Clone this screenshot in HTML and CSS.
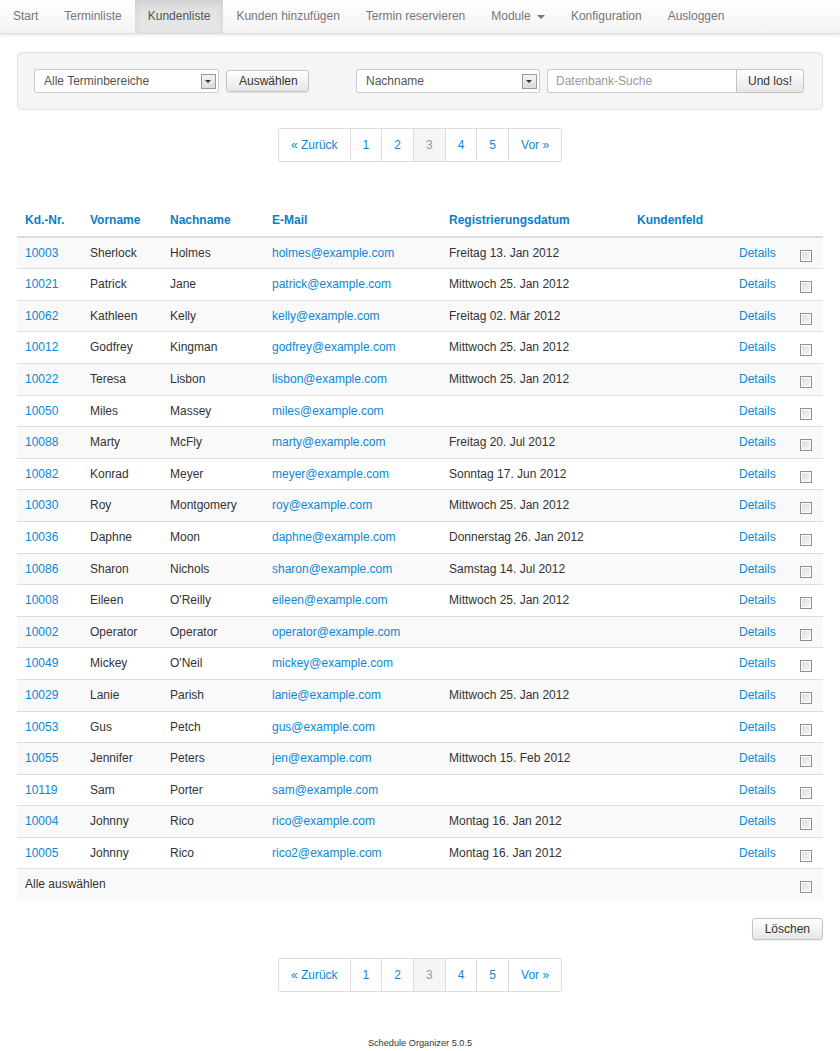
FILE: index.html
```html
<!DOCTYPE html>
<html lang="de">
<head>
    <meta charset="UTF-8">
    <title>Kundenliste</title>
    <link rel="stylesheet" href="styles.css">
</head>
<body>
    <nav class="navbar">
        <a href="#">Start</a>
        <a href="#">Terminliste</a>
        <a href="#" class="active">Kundenliste</a>
        <a href="#">Kunden hinzufügen</a>
        <a href="#">Termin reservieren</a>
        <a href="#">Module <span class="caret"></span></a>
        <a href="#">Konfiguration</a>
        <a href="#">Ausloggen</a>
    </nav>

    <div class="page">
        <div class="well">
            <div class="group">
                <div class="select-box wide">
                    <select><option>Alle Terminbereiche</option></select>
                    <span class="arrow"></span>
                </div>
                <button class="btn">Auswählen</button>
            </div>
            <div class="group">
                <div class="select-box">
                    <select><option>Nachname</option></select>
                    <span class="arrow"></span>
                </div>
                <div class="search">
                    <input type="text" placeholder="Datenbank-Suche">
                    <button class="btn attached">Und los!</button>
                </div>
            </div>
        </div>

        <ul class="pagination">
            <li><a href="#">« Zurück</a></li>
            <li><a href="#">1</a></li>
            <li><a href="#">2</a></li>
            <li class="current"><span>3</span></li>
            <li><a href="#">4</a></li>
            <li><a href="#">5</a></li>
            <li><a href="#">Vor »</a></li>
        </ul>

        <table class="customers">
            <thead>
                <tr>
                    <th class="c-nr">Kd.-Nr.</th>
                    <th class="c-first">Vorname</th>
                    <th class="c-last">Nachname</th>
                    <th class="c-mail">E-Mail</th>
                    <th class="c-date">Registrierungsdatum</th>
                    <th class="c-field">Kundenfeld</th>
                    <th class="c-det"></th>
                    <th class="c-chk"></th>
                </tr>
            </thead>
            <tbody id="rows"></tbody>
            <tfoot>
                <tr>
                    <td colspan="7">Alle auswählen</td>
                    <td><input type="checkbox" class="chk"></td>
                </tr>
            </tfoot>
        </table>

        <div class="actions">
            <button class="btn">Löschen</button>
        </div>

        <ul class="pagination">
            <li><a href="#">« Zurück</a></li>
            <li><a href="#">1</a></li>
            <li><a href="#">2</a></li>
            <li class="current"><span>3</span></li>
            <li><a href="#">4</a></li>
            <li><a href="#">5</a></li>
            <li><a href="#">Vor »</a></li>
        </ul>

        <footer class="footer">Schedule Organizer 5.0.5</footer>
    </div>

    <script>
        const customers = [
            ["10003", "Sherlock", "Holmes", "holmes@example.com", "Freitag 13. Jan 2012"],
            ["10021", "Patrick", "Jane", "patrick@example.com", "Mittwoch 25. Jan 2012"],
            ["10062", "Kathleen", "Kelly", "kelly@example.com", "Freitag 02. Mär 2012"],
            ["10012", "Godfrey", "Kingman", "godfrey@example.com", "Mittwoch 25. Jan 2012"],
            ["10022", "Teresa", "Lisbon", "lisbon@example.com", "Mittwoch 25. Jan 2012"],
            ["10050", "Miles", "Massey", "miles@example.com", ""],
            ["10088", "Marty", "McFly", "marty@example.com", "Freitag 20. Jul 2012"],
            ["10082", "Konrad", "Meyer", "meyer@example.com", "Sonntag 17. Jun 2012"],
            ["10030", "Roy", "Montgomery", "roy@example.com", "Mittwoch 25. Jan 2012"],
            ["10036", "Daphne", "Moon", "daphne@example.com", "Donnerstag 26. Jan 2012"],
            ["10086", "Sharon", "Nichols", "sharon@example.com", "Samstag 14. Jul 2012"],
            ["10008", "Eileen", "O'Reilly", "eileen@example.com", "Mittwoch 25. Jan 2012"],
            ["10002", "Operator", "Operator", "operator@example.com", ""],
            ["10049", "Mickey", "O'Neil", "mickey@example.com", ""],
            ["10029", "Lanie", "Parish", "lanie@example.com", "Mittwoch 25. Jan 2012"],
            ["10053", "Gus", "Petch", "gus@example.com", ""],
            ["10055", "Jennifer", "Peters", "jen@example.com", "Mittwoch 15. Feb 2012"],
            ["10119", "Sam", "Porter", "sam@example.com", ""],
            ["10004", "Johnny", "Rico", "rico@example.com", "Montag 16. Jan 2012"],
            ["10005", "Johnny", "Rico", "rico2@example.com", "Montag 16. Jan 2012"]
        ];

        const tbody = document.getElementById("rows");
        customers.forEach(c => {
            const tr = document.createElement("tr");
            tr.innerHTML = `
                <td><a href="#">${c[0]}</a></td>
                <td>${c[1]}</td>
                <td>${c[2]}</td>
                <td><a href="#">${c[3]}</a></td>
                <td>${c[4]}</td>
                <td></td>
                <td><a href="#">Details</a></td>
                <td><input type="checkbox" class="chk"></td>
            `;
            tbody.appendChild(tr);
        });
    </script>
</body>
</html>
```

FILE: styles.css
```css
* {
    box-sizing: border-box;
}

body {
    margin: 0;
    font-family: "Liberation Sans", Arial, sans-serif;
    font-size: 12px;
    line-height: 18.6px;
    color: #333;
    background: #fff;
}

a {
    color: #0a88d4;
    text-decoration: none;
}

/* navbar */
.navbar {
    display: flex;
    height: 34px;
    background: linear-gradient(to bottom, #ffffff 0%, #f3f3f3 100%);
    border-bottom: 1px solid #dcdcdc;
    box-shadow: 0 1px 3px rgba(0, 0, 0, 0.12);
}

.navbar a {
    display: block;
    padding: 0 13px;
    line-height: 33px;
    color: #777;
}

.navbar a.active {
    color: #555;
    background: linear-gradient(to bottom, #dedede 0%, #e9e9e9 100%);
    box-shadow: inset 0 3px 8px rgba(0, 0, 0, 0.08);
}

.caret {
    display: inline-block;
    width: 0;
    height: 0;
    margin-left: 3px;
    vertical-align: middle;
    border-top: 4px solid #777;
    border-left: 4px solid transparent;
    border-right: 4px solid transparent;
}

.page {
    padding: 0 17px;
}

/* search well */
.well {
    display: flex;
    gap: 47px;
    margin-top: 18px;
    padding: 16px;
    background: #f5f5f5;
    border: 1px solid #e3e3e3;
    border-radius: 4px;
    box-shadow: inset 0 1px 1px rgba(0, 0, 0, 0.03);
}

.group {
    display: flex;
    align-items: center;
    gap: 7px;
}

.select-box {
    position: relative;
    width: 184px;
    height: 24px;
}

.select-box.wide {
    width: 185px;
}

.select-box select {
    appearance: none;
    -webkit-appearance: none;
    width: 100%;
    height: 24px;
    padding: 0 24px 0 9px;
    font: inherit;
    color: #555;
    background: #fff;
    border: 1px solid #ccc;
    border-radius: 2px;
    outline: none;
}

.select-box .arrow {
    position: absolute;
    top: 5px;
    right: 3px;
    width: 15px;
    height: 15px;
    background: linear-gradient(to bottom, #f4f4f4, #dcdcdc);
    border: 1px solid #9a9a9a;
    pointer-events: none;
}

.select-box .arrow::after {
    content: "";
    position: absolute;
    top: 5px;
    left: 3px;
    border-top: 3px solid #333;
    border-left: 3px solid transparent;
    border-right: 3px solid transparent;
}

.search {
    display: flex;
}

.search input {
    width: 189px;
    height: 24px;
    padding: 0 8px;
    font: inherit;
    color: #555;
    border: 1px solid #ccc;
    border-right: none;
    border-radius: 3px 0 0 3px;
    outline: none;
}

.search input::placeholder {
    color: #999;
}

.btn {
    height: 22px;
    padding: 0 12px;
    font: inherit;
    line-height: 20px;
    white-space: nowrap;
    color: #333;
    background: linear-gradient(to bottom, #ffffff 0%, #e6e6e6 100%);
    border: 1px solid #c4c4c4;
    border-radius: 3px;
    box-shadow: 0 1px 1px rgba(0, 0, 0, 0.08);
    cursor: pointer;
}

.group > .btn {
    width: 83px;
}

.btn.attached {
    width: 68px;
    height: 24px;
    padding: 0;
    border-radius: 0 3px 3px 0;
    box-shadow: none;
}

/* pagination */
.pagination {
    display: flex;
    justify-content: center;
    margin: 18px 0 0;
    padding: 0;
    list-style: none;
}

.pagination li a,
.pagination li span {
    display: block;
    padding: 7px 12px;
    line-height: 18px;
    border: 1px solid #ddd;
    margin-left: -1px;
    background: #fff;
}

.pagination li:first-child a {
    margin-left: 0;
    border-radius: 3px 0 0 3px;
}

.pagination li:last-child a {
    border-radius: 0 3px 3px 0;
}

.pagination li.current span {
    color: #999;
    background: #f5f5f5;
}

/* table */
.customers {
    width: 100%;
    margin-top: 43px;
    border-collapse: collapse;
}

.customers th,
.customers td {
    padding: 6px 8px;
    text-align: left;
    vertical-align: top;
}

.customers th {
    color: #0a7fc8;
    font-weight: bold;
    border-bottom: 2px solid #ddd;
}

.customers td {
    border-top: 1px solid #ddd;
}

.customers tbody tr:nth-child(odd) td,
.customers tfoot td {
    background: #f9f9f9;
}

.customers tbody tr:first-child td {
    border-top: none;
}

.c-nr { width: 65px; }
.c-first { width: 80px; }
.c-last { width: 102px; }
.c-mail { width: 177px; }
.c-date { width: 188px; }
.c-field { width: 102px; }
.c-det { width: 59px; }
.c-chk { width: 33px; }

.chk {
    appearance: none;
    -webkit-appearance: none;
    display: block;
    width: 12px;
    height: 12px;
    margin: 6px 0 0 2px;
    background: linear-gradient(135deg, #dcdcdc 0%, #f7f7f7 100%);
    border: 1px solid #8f8f8f;
    box-shadow: inset 0 0 0 1px #fff;
}

.actions {
    display: flex;
    justify-content: flex-end;
    margin-top: 18px;
}

.actions .btn {
    padding: 0 12px;
}

.pagination + .footer {
    margin-top: 42px;
}

.footer {
    text-align: center;
    font-size: 9.2px;
    color: #333;
}
```
